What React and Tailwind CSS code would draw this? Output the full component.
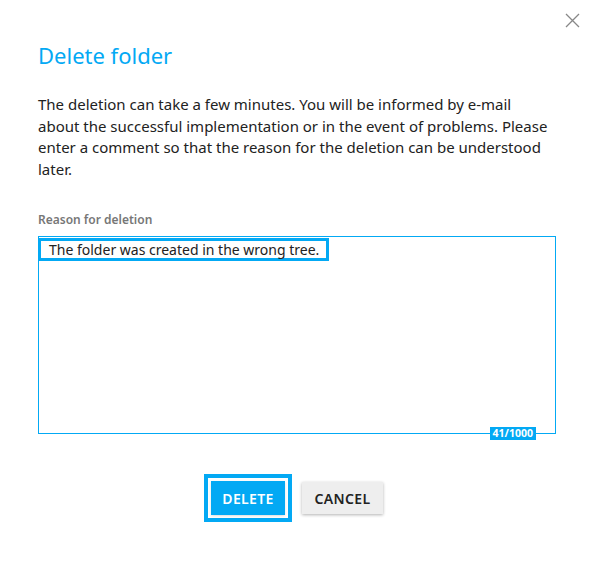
const App = () => {
  return (
    <div className="w-[592px] h-[564px] bg-white relative text-[#222]" style={{ fontFamily: '"Noto Sans", "Open Sans", sans-serif' }}>
      <button className="absolute top-[13px] right-[12px] text-[#888]">
        <svg width="15" height="15" viewBox="0 0 15 15" fill="none" stroke="currentColor" strokeWidth="1.3">
          <path d="M1 1 L14 14 M14 1 L1 14" />
        </svg>
      </button>
      <div className="pl-[38px] pr-[36px] pt-[40px]">
        <h1 className="text-[22px] leading-[30px] text-[#03a9f4] font-normal">Delete folder</h1>
        <p className="mt-[24px] text-[15px] leading-[21.5px] text-[#222]">
          The deletion can take a few minutes. You will be informed by e-mail about the successful implementation or in the event of problems. Please enter a comment so that the reason for the deletion can be understood later.
        </p>
        <label className="block mt-[31px] text-[12px] font-semibold text-[#777]">Reason for deletion</label>
        <div className="relative mt-[7px] h-[198px] border border-[#03a9f4]">
          <div className="inline-block -mt-px -ml-px border-[3px] border-[#03a9f4] pl-[8px] pr-[7px] text-[14px] leading-[16px] pt-[1px]">
            The folder was created in the wrong tree.
          </div>
          <span className="absolute right-[19px] bottom-[-7px] bg-[#03a9f4] text-white text-[10.5px] font-bold leading-[13px] px-[3px]">41/1000</span>
        </div>
        <div className="flex justify-center items-center gap-[10px] mt-[40px] pr-[7px]">
          <div className="border-[4px] border-[#03a9f4] p-[3px]">
            <button className="bg-[#03a9f4] text-white text-[14px] font-semibold h-[34px] w-[74px] tracking-wide shadow-sm">DELETE</button>
          </div>
          <button className="bg-[#eeeeee] text-[#222] text-[14px] font-semibold h-[32px] w-[81px] tracking-wide shadow-[0_1px_3px_rgba(0,0,0,0.3)]">CANCEL</button>
        </div>
      </div>
    </div>
  );
};

export default App;
